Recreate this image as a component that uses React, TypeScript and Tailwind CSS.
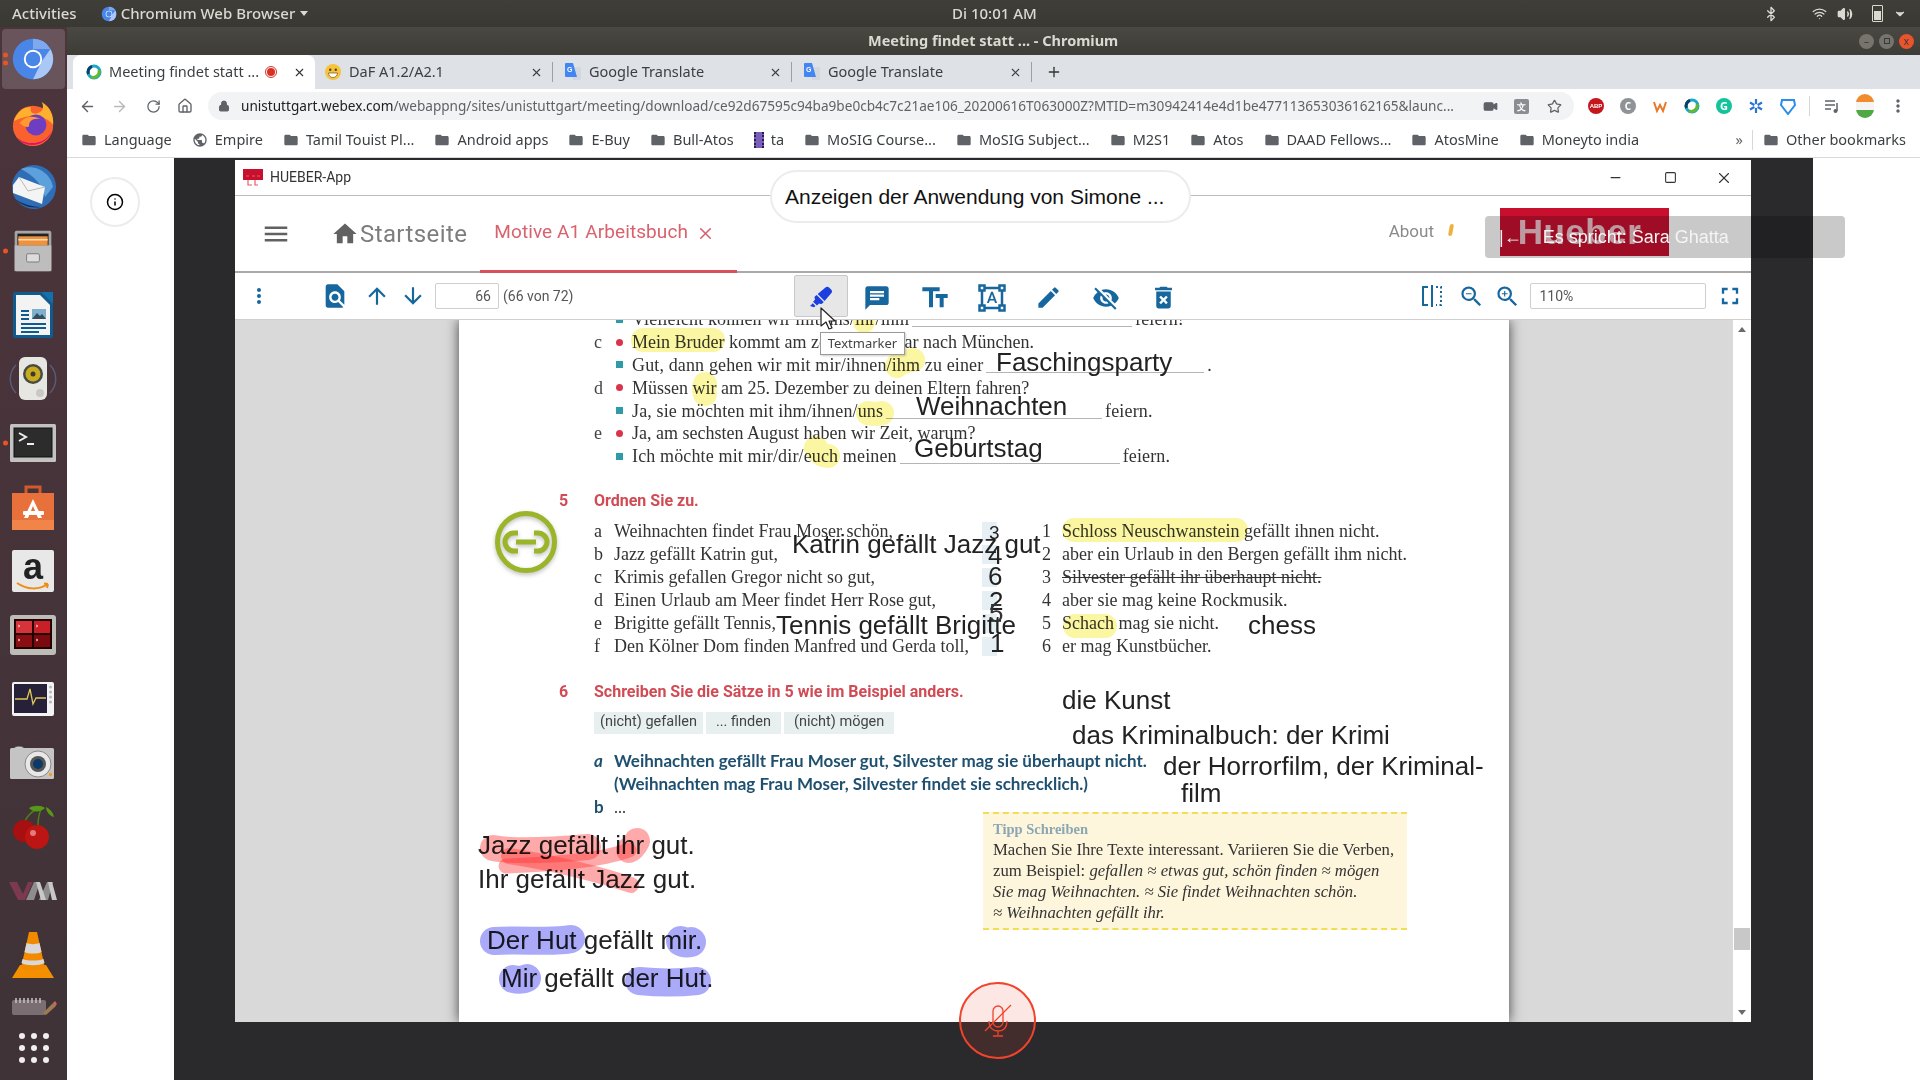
import type { ReactNode } from 'react';
import { ArrowLeft, ArrowRight, Bluetooth, ChevronDown, Home, Info, Lock, Minus, Plus, RotateCw, Square, Star, Video, Volume2, Wifi, X } from 'lucide-react';
import { FaHighlighter } from 'react-icons/fa';
import {
  MdArrowDownward,
  MdArrowUpward,
  MdChat,
  MdDeleteForever,
  MdEdit,
  MdFindInPage,
  MdFolder,
  MdFormatShapes,
  MdFullscreen,
  MdHome,
  MdMenu,
  MdMoreVert,
  MdPublic,
  MdTextFields,
  MdVisibilityOff,
  MdZoomIn,
  MdZoomOut,
} from 'react-icons/md';

function ChromiumIcon({ size = 44 }: { size?: number }) {
  return (
    <svg width={size} height={size} viewBox="0 0 48 48">
      <circle cx="24" cy="24" r="22" fill="#4a86e8" />
      <path d="M24 2a22 22 0 0 1 19 11H24z" fill="#7fa9ee" />
      <path d="M43 13a22 22 0 0 1-19 33l10-20z" fill="#a9c7f7" />
      <circle cx="24" cy="24" r="10" fill="#fff" />
      <circle cx="24" cy="24" r="8" fill="#4a86e8" />
    </svg>
  );
}

function FirefoxIcon() {
  return (
    <svg width="46" height="46" viewBox="0 0 48 48">
      <circle cx="24" cy="27" r="21" fill="#f9622d" />
      <path d="M4 22C8 10 18 6 22 8c-2 4 2 7 6 6 8-2 7-9 5-12 9 5 13 14 12 24-6-8-20-14-41-4z" fill="#ffb02e" />
      <path d="M6 38c10 10 30 10 38-6-4 14-26 22-38 6z" fill="#e3116c" />
      <circle cx="27" cy="26" r="11" fill="#6e3dc2" />
      <path d="M10 24c6-8 16-8 22-4-8-2-12 2-12 6s-6 2-10-2z" fill="#ff9a2e" />
    </svg>
  );
}

function ThunderbirdIcon() {
  return (
    <svg width="48" height="48" viewBox="0 0 48 48">
      <circle cx="25" cy="24" r="22" fill="#2f6db5" />
      <path d="M12 6c14-6 30 4 32 18l-8 10c-2-12-12-22-24-28z" fill="#5da1dc" />
      <path d="M4 22l6-8 26 10-3 17-29-11z" fill="#f4f4f4" />
      <path d="M10 14l9 14 17-4" fill="none" stroke="#b9b9b9" strokeWidth="1" />
      <path d="M6 36c6 6 14 10 26 8-10 0-20-4-26-8z" fill="#17315f" />
    </svg>
  );
}

function FilesIcon() {
  return (
    <svg width="44" height="44" viewBox="0 0 48 48">
      <rect x="4" y="2" width="40" height="44" rx="2" fill="#a6a6a6" />
      <rect x="7" y="5" width="34" height="13" fill="#222" />
      <rect x="8" y="8" width="32" height="10" fill="#f0913c" />
      <rect x="8" y="11" width="32" height="1.5" fill="#fde3c0" />
      <rect x="4" y="18" width="40" height="28" fill="#bdbdbd" />
      <rect x="17" y="27" width="14" height="9" rx="1.5" fill="#dcdcdc" stroke="#777" />
    </svg>
  );
}

function WriterIcon() {
  return (
    <svg width="44" height="48" viewBox="0 0 44 48">
      <path d="M2 3a2 2 0 0 1 2-2h26l12 12v32a2 2 0 0 1-2 2H4a2 2 0 0 1-2-2z" fill="#0f5a8e" />
      <path d="M5 4h24l10 10v30H5z" fill="#f3f3f3" />
      <path d="M30 1h12v12z" fill="#1370ad" />
      <path d="M10 20h8M10 24h8M10 28h8M10 33h25M10 37h25M10 41h18" stroke="#0f5a8e" strokeWidth="2" />
      <rect x="21" y="18" width="14" height="10" fill="#7fb1cf" />
      <path d="M21 28l5-6 3 3 2-2 4 5z" fill="#33505f" />
    </svg>
  );
}

function SpeakerIcon() {
  return (
    <svg width="48" height="48" viewBox="0 0 48 48">
      <path d="M7 10a20 20 0 0 0 0 28M41 10a20 20 0 0 1 0 28" fill="none" stroke="#5a5a78" strokeWidth="1.5" />
      <rect x="10" y="2" width="28" height="43" rx="6" fill="#e6e6e2" />
      <circle cx="24" cy="19" r="10" fill="#4a4a44" />
      <circle cx="24" cy="19" r="7.5" fill="#c9ac1e" />
      <circle cx="24" cy="19" r="2.5" fill="#3a3a33" />
      <circle cx="31" cy="38" r="4" fill="#c9c9c4" />
    </svg>
  );
}

function TerminalIcon() {
  return (
    <svg width="46" height="38" viewBox="0 0 46 38">
      <rect x="0" y="0" width="46" height="38" rx="1.5" fill="#c2c2c0" />
      <rect x="4" y="4" width="38" height="29" fill="#2c2c2c" stroke="#111" />
      <path d="M9 9l7 4-7 4" fill="none" stroke="#eee" strokeWidth="2" />
      <path d="M17 20h7" stroke="#eee" strokeWidth="2" />
    </svg>
  );
}

function StoreIcon() {
  return (
    <svg width="44" height="46" viewBox="0 0 44 46">
      <path d="M15 10V3h14v7" fill="none" stroke="#cf5a2c" strokeWidth="3" />
      <path d="M1 9h42v37H1z" fill="#e8703a" />
      <path d="M1 36h42v10H1z" fill="#f08449" />
      <path d="M22 15l9 19h-4l-5-12-5 12h-4z" fill="#fff" />
      <rect x="12" y="27" width="21" height="4" rx="1" fill="#fff" />
    </svg>
  );
}

function AmazonIcon() {
  return (
    <div className="flex h-[42px] w-[42px] flex-col items-center rounded-[2px] bg-[#e8e8e8]">
      <span className="text-[36px] font-bold leading-[34px] text-[#222] [font-family:'Liberation_Sans',sans-serif]">a</span>
      <svg width="36" height="9" viewBox="0 0 36 9" className="-mt-[2px]">
        <path d="M2 1c10 7 22 7 31 1M33 2l-4-.5M33 2l-1 4" fill="none" stroke="#f08c14" strokeWidth="2" />
      </svg>
    </div>
  );
}

function TerminatorIcon() {
  return (
    <svg width="46" height="40" viewBox="0 0 46 40">
      <rect width="46" height="40" rx="3" fill="#bdbdb8" />
      <rect x="4" y="4" width="38" height="30" fill="#220000" />
      <rect x="6" y="6" width="16" height="12" fill="#d6333a" />
      <rect x="24" y="6" width="16" height="12" fill="#c91f27" />
      <rect x="6" y="20" width="16" height="12" fill="#8a0e12" />
      <rect x="24" y="20" width="16" height="12" fill="#7a0a0e" />
      <path d="M8 10l2 1-2 1M26 10l2 1-2 1M8 24l2 1-2 1M26 24l2 1-2 1" stroke="#fff" strokeWidth=".7" fill="none" />
    </svg>
  );
}

function MonitorIcon() {
  return (
    <svg width="42" height="34" viewBox="0 0 42 34">
      <rect width="42" height="34" rx="2" fill="#f4f4f4" />
      <rect x="2" y="2" width="33" height="29" fill="#262138" />
      <path d="M3 17h12l3-10 3 15 3-6h10" fill="none" stroke="#dcc755" strokeWidth="1.3" />
      <circle cx="38.5" cy="5" r="1.6" fill="#bbb" />
      <circle cx="38.5" cy="10" r="1.6" fill="#bbb" />
      <circle cx="38.5" cy="15" r="1.6" fill="#bbb" />
      <circle cx="38.5" cy="20" r="1.6" fill="#bbb" />
    </svg>
  );
}

function CameraIcon() {
  return (
    <svg width="46" height="34" viewBox="0 0 46 34">
      <ellipse cx="9" cy="3" rx="5" ry="2.5" fill="#d4d4d4" stroke="#777" strokeWidth=".6" />
      <rect y="2" width="44" height="31" rx="1.5" fill="#c4c4c4" />
      <circle cx="28" cy="18" r="13" fill="#e8e8e8" stroke="#888" />
      <circle cx="28" cy="18" r="8" fill="#555" />
      <circle cx="28" cy="18" r="5" fill="#0c3a66" />
      <rect x="39" y="27" width="3" height="3" fill="#f0a030" />
    </svg>
  );
}

function CherryIcon() {
  return (
    <svg width="46" height="46" viewBox="0 0 46 46">
      <path d="M15 17c3-6 8-10 12-12M28 22c0-6 1-12 3-17" fill="none" stroke="#4f7c16" strokeWidth="1.5" />
      <path d="M19 4c5-3 12-3 16 0-4 4-12 5-16 0zM36 3c4 2 7 5 8 10-4-1-8-5-8-10z" fill="#559a16" />
      <circle cx="14" cy="27" r="11" fill="#a80f10" />
      <circle cx="27" cy="33" r="12" fill="#bd1414" />
      <circle cx="23" cy="29" r="3" fill="#e77a7a" />
    </svg>
  );
}

function VimIcon() {
  return (
    <svg width="48" height="20" viewBox="0 0 48 20">
      <path d="M0 1h8l6 12 5-12h5l-8 18H9z" fill="#7c3a50" />
      <path d="M17 19L25 1h6l-6 18zM30 19l8-18h6l-5 18z" fill="#8d8d8d" />
      <path d="M27 1h4l6 18h-5zM39 1h4l5 18h-5z" fill="#c8c8c8" />
    </svg>
  );
}

function VlcIcon() {
  return (
    <svg width="42" height="46" viewBox="0 0 42 46">
      <path d="M8 33L0 46h42l-8-13z" fill="#f49000" />
      <path d="M17 0h8l8 36c-4 3-20 3-24 0z" fill="#f28a00" />
      <path d="M14.5 11c3 1.5 10 1.5 13 0l2 9c-4 2-13 2-17 0zM10.5 27c5 2 16 2 21 0l1 4c-5 3-18 3-23 0z" fill="#d8d8d8" />
    </svg>
  );
}

function NotesIcon() {
  return (
    <svg width="46" height="18" viewBox="0 0 46 18">
      <rect x="1" y="3" width="34" height="15" rx="2" fill="#7b6e72" />
      <path d="M5 1v5M9 1v5M13 1v5M17 1v5M21 1v5M25 1v5M29 1v5" stroke="#c9c4c4" strokeWidth="1.5" />
      <path d="M32 16l10-10 3 3-10 9z" fill="#9c7a52" />
      <path d="M42 6l2-2 2 3-2 2z" fill="#d0635a" />
    </svg>
  );
}

function DockDots() {
  return (
    <div className="grid grid-cols-3 gap-x-[6px] gap-y-[6px]">
      {Array.from({ length: 9 }).map((_, i) => (
        <span key={i} className="h-[6px] w-[6px] rounded-full bg-[#f0eeee]" />
      ))}
    </div>
  );
}

const dockItems: { icon: ReactNode; dots?: number; active?: boolean }[] = [
  { icon: <ChromiumIcon />, dots: 2, active: true },
  { icon: <FirefoxIcon /> },
  { icon: <ThunderbirdIcon /> },
  { icon: <FilesIcon />, dots: 1 },
  { icon: <WriterIcon /> },
  { icon: <SpeakerIcon /> },
  { icon: <TerminalIcon />, dots: 1 },
  { icon: <StoreIcon /> },
  { icon: <AmazonIcon /> },
  { icon: <TerminatorIcon /> },
  { icon: <MonitorIcon /> },
  { icon: <CameraIcon /> },
  { icon: <CherryIcon /> },
  { icon: <VimIcon /> },
  { icon: <VlcIcon /> },
];

function Dock() {
  return (
    <aside className="flex w-[67px] shrink-0 flex-col items-center bg-[linear-gradient(180deg,#4c343b_0%,#3f3337_100%)]">
      {dockItems.map((item, i) => (
        <div key={i} className="relative flex h-[64px] w-full items-center justify-center pr-[1px]">
          {item.active ? <div className="absolute inset-x-[2px] inset-y-[2px] rounded-[4px] bg-[rgba(255,255,255,0.16)]" /> : null}
          <div className="relative flex items-center justify-center">{item.icon}</div>
          {item.dots ? (
            <div className="absolute left-[3px] top-1/2 flex -translate-y-1/2 flex-col gap-[3px]">
              {Array.from({ length: item.dots }).map((_, d) => (
                <span key={d} className="h-[5px] w-[5px] rounded-full bg-[#e95420]" />
              ))}
            </div>
          ) : null}
        </div>
      ))}
      <div className="flex h-[38px] items-center justify-center"><NotesIcon /></div>
      <div className="flex h-[46px] items-center justify-center"><DockDots /></div>
    </aside>
  );
}

function TopPanel() {
  return (
    <div className="flex h-[27px] shrink-0 items-center bg-[linear-gradient(180deg,#403e39_0%,#3a3833_100%)] text-[15px] font-medium text-[#dcd9d1] [font-family:'Noto_Sans',sans-serif]">
      <div className="flex w-[952px] items-center pl-[12px]">
        <span>Activities</span>
        <span className="ml-[24px] mr-[4px]"><ChromiumIcon size={16} /></span>
        <span>Chromium Web Browser</span>
        <span className="ml-[5px] h-0 w-0 border-x-[4px] border-t-[5px] border-x-transparent border-t-[#dcd9d1]" />
      </div>
      <span>Di 10:01 AM</span>
      <div className="ml-auto flex items-center pr-[13px]">
        <Bluetooth size={16} />
        <Wifi size={15} className="ml-[33px]" />
        <Volume2 size={16} className="ml-[10px]" fill="currentColor" />
        <div className="relative ml-[19px] h-[17px] w-[11px] rounded-[1px] border-[1.5px] border-[#dcd9d1]">
          <div className="absolute inset-x-[1px] bottom-[1px] top-[5px] bg-[#dcd9d1]" />
        </div>
        <ChevronDown size={14} className="ml-[10px]" fill="currentColor" />
      </div>
    </div>
  );
}

function WebexFavicon() {
  return (
    <svg width="16" height="16" viewBox="0 0 16 16">
      <circle cx="8" cy="8" r="6" fill="none" stroke="#1ba7c9" strokeWidth="3" />
      <path d="M5 13a6 6 0 0 0 8-7" fill="none" stroke="#66b82e" strokeWidth="3" />
      <path d="M2.5 10A6 6 0 0 1 6 2.3" fill="none" stroke="#0b3f63" strokeWidth="3" />
    </svg>
  );
}

function SmileyFavicon() {
  return (
    <svg width="16" height="16" viewBox="0 0 16 16">
      <circle cx="8" cy="8" r="8" fill="#f6c33a" />
      <circle cx="5.2" cy="5.8" r="1.2" fill="#5a3a10" />
      <circle cx="10.8" cy="5.8" r="1.2" fill="#5a3a10" />
      <path d="M3.5 9h9a4.5 4.5 0 0 1-9 0z" fill="#fff" stroke="#5a3a10" strokeWidth=".6" />
    </svg>
  );
}

function TranslateFavicon() {
  return (
    <svg width="16" height="18" viewBox="0 0 16 18">
      <path d="M6 4h9a1 1 0 0 1 1 1v11a1 1 0 0 1-1 1H8z" fill="#d4d8de" />
      <path d="M1 0h7l4 14H1a1 1 0 0 1-1-1V1a1 1 0 0 1 1-1z" fill="#4285f4" />
      <text x="2" y="9" fontSize="7" fontWeight="700" fill="#fff" fontFamily="Liberation Sans, sans-serif">G</text>
    </svg>
  );
}

function TabStrip() {
  const tabs = [
    { title: 'DaF A1.2/A2.1', icon: <SmileyFavicon />, cls: 'w-[238px] pl-[10px]' },
    { title: 'Google Translate', icon: <TranslateFavicon />, cls: 'w-[239px] pl-[12px]' },
    { title: 'Google Translate', icon: <TranslateFavicon />, cls: 'w-[240px] pl-[12px]' },
  ];
  return (
    <div className="flex h-[34px] shrink-0 items-end bg-[#dee1e6] pl-[6px] text-[14.5px] text-[#3c4043]">
      <div className="flex h-[34px] w-[242px] items-center rounded-t-[8px] bg-white pl-[13px] pr-[9px]">
        <WebexFavicon />
        <span className="ml-[7px] whitespace-nowrap">Meeting findet statt ...</span>
        <span className="ml-[6px] flex h-[12px] w-[12px] items-center justify-center rounded-full border border-[#d93025]">
          <span className="h-[8px] w-[8px] rounded-full bg-[#d93025]" />
        </span>
        <X size={13} className="ml-auto text-[#333]" />
      </div>
      {tabs.map((tab, i) => (
        <div key={i} className={`flex h-[34px] items-center ${tab.cls}`}>
          {tab.icon}
          <span className="ml-[8px] whitespace-nowrap">{tab.title}</span>
          <X size={13} className="ml-auto" />
          <span className="ml-[9px] h-[20px] w-px bg-[#9aa0a6]" />
        </div>
      ))}
      <Plus size={16} className="mb-[9px] ml-[14px] text-[#333]" />
    </div>
  );
}

function AddressBar() {
  return (
    <div className="flex h-[34px] shrink-0 items-center bg-white text-[#5f6368]">
      <ArrowLeft size={17} className="ml-[12px]" />
      <ArrowRight size={17} className="ml-[15px] text-[#b8babd]" />
      <RotateCw size={15} className="ml-[18px]" />
      <Home size={16} className="ml-[16px]" />
      <div className="ml-[15px] flex h-[28px] w-[1366px] items-center rounded-full bg-[#f1f3f4] pl-[10px] pr-[12px] text-[13.6px] text-[#5f6368]">
        <Lock size={12} fill="currentColor" className="text-[#5f6368]" />
        <span className="ml-[11px] w-[1226px] whitespace-nowrap">
          <span className="text-[#202124]">unistuttgart.webex.com</span>/webappng/sites/unistuttgart/meeting/download/ce92d67595c94ba9be0cb4c7c21ae106_20200616T063000Z?MTID=m30942414e4d1be477113653036162165&launc...
        </span>
        <Video size={15} fill="currentColor" className="ml-[18px]" />
        <span className="ml-[16px] flex h-[15px] w-[15px] items-center justify-center rounded-[2px] bg-[#8a8d91] text-[9px] font-bold leading-none text-white">文</span>
        <Star size={15} className="ml-[18px]" />
      </div>
      <div className="ml-[14px] flex items-center">
        <span className="flex h-[16px] w-[16px] items-center justify-center rounded-full bg-[#c4161c] text-[6px] font-bold text-white [font-family:'Liberation_Sans',sans-serif]">ABP</span>
        <span className="ml-[16px] flex h-[16px] w-[16px] items-center justify-center rounded-full bg-[#8f9397] text-[10px] font-bold text-white">C</span>
        <svg width="16" height="16" viewBox="0 0 16 16" className="ml-[16px]"><path d="M2 4l3 9 3-6 3 6 3-9" fill="none" stroke="#e8792b" strokeWidth="2" /></svg>
        <span className="ml-[16px]"><WebexFavicon /></span>
        <span className="ml-[16px] flex h-[16px] w-[16px] items-center justify-center rounded-full bg-[#15c39a] text-[11px] font-bold text-white">G</span>
        <svg width="16" height="16" viewBox="0 0 16 16" className="ml-[16px]"><path d="M8 1v14M2 4.5l12 7M14 4.5l-12 7" stroke="#2a76d2" strokeWidth="2.2" /><circle cx="8" cy="8" r="2" fill="#fff" /></svg>
        <svg width="16" height="18" viewBox="0 0 16 18" className="ml-[16px]"><path d="M2 3h12l1 5-7 9-7-9z" fill="none" stroke="#2a8ee8" strokeWidth="2" /></svg>
        <span className="ml-[13px] h-[20px] w-px bg-[#d5d7da]" />
        <svg width="16" height="16" viewBox="0 0 16 16" className="ml-[14px]"><path d="M1 3h10M1 7h10M1 11h6" stroke="#5f6368" strokeWidth="1.5" /><path d="M13 5v8" stroke="#5f6368" strokeWidth="1.5" /><circle cx="11.5" cy="13" r="2" fill="#5f6368" /></svg>
        <span className="ml-[16px] h-[24px] w-[18px] rounded-full bg-[linear-gradient(180deg,#f08c2c_0%,#f08c2c_33%,#f4f4f4_33%,#f4f4f4_66%,#4fa843_66%)]" />
        <MdMoreVert size={20} className="ml-[14px] text-[#5f6368]" />
      </div>
    </div>
  );
}

function BookmarksBar() {
  const marks: { label: string; icon?: ReactNode }[] = [
    { label: 'Language' },
    { label: 'Empire', icon: <MdPublic size={16} /> },
    { label: 'Tamil Touist Pl...' },
    { label: 'Android apps' },
    { label: 'E-Buy' },
    { label: 'Bull-Atos' },
    { label: 'ta', icon: <span className="h-[16px] w-[10px] border-x-2 border-dotted border-[#2a1c4a] bg-[#7a5fb8]" /> },
    { label: 'MoSIG Course...' },
    { label: 'MoSIG Subject...' },
    { label: 'M2S1' },
    { label: 'Atos' },
    { label: 'DAAD Fellows...' },
    { label: 'AtosMine' },
    { label: 'Moneyto india' },
  ];
  return (
    <div className="flex h-[35px] shrink-0 items-center border-b border-[#d7d9dc] bg-white pl-[14px] text-[14.5px] text-[#3c4043]">
      <div className="flex items-center gap-[20px]">
        {marks.map((mark) => (
          <div key={mark.label} className="flex items-center gap-[7px] text-[#5f6368]">
            {mark.icon ?? <MdFolder size={16} />}
            <span className="whitespace-nowrap text-[#3c4043]">{mark.label}</span>
          </div>
        ))}
      </div>
      <span className="ml-auto text-[#5f6368]">»</span>
      <span className="ml-[9px] h-[20px] w-px bg-[#d5d7da]" />
      <div className="ml-[10px] mr-[14px] flex items-center gap-[7px] text-[#5f6368]">
        <MdFolder size={16} />
        <span className="whitespace-nowrap text-[#3c4043]">Other bookmarks</span>
      </div>
    </div>
  );
}

function AppTitleBar() {
  return (
    <div className="flex h-[36px] shrink-0 items-center border-b border-[#bdbdbd] bg-white pl-[8px] text-[14px] text-[#333] [font-family:'Roboto',sans-serif]">
      <svg width="20" height="18" viewBox="0 0 20 18">
        <path d="M0 0h20v11H0z" fill="#c8102e" />
        <path d="M3 7h3M9 7h3M14 7h3M5 11v5h4M12 11v5h3" stroke="#e8596c" strokeWidth="1.2" fill="none" />
      </svg>
      <span className="ml-[7px]">HUEBER-App</span>
      <div className="ml-auto flex items-center pr-[18px] text-[#333]">
        <Minus size={15} />
        <Square size={13} className="ml-[41px]" />
        <X size={18} strokeWidth={1.5} className="ml-[38px]" />
      </div>
    </div>
  );
}

function AppHeader() {
  return (
    <div className="relative flex h-[77px] shrink-0 items-center border-b-2 border-[#a9a9a9] bg-white [font-family:'Roboto',sans-serif]">
      <MdMenu size={30} className="ml-[26px] text-[#616161]" />
      <MdHome size={28} className="ml-[40px] text-[#616161]" />
      <span className="ml-[1px] text-[24px] tracking-[0.4px] text-[#7d7d7d]">Startseite</span>
      <span className="ml-[27px] -mt-[3px] text-[19px] tracking-[0.1px] text-[#d9626d]">Motive A1 Arbeitsbuch</span>
      <X size={19} className="ml-[8px] text-[#d9626d]" />
      <div className="absolute bottom-[-2px] left-[245px] h-[3px] w-[257px] bg-[#d9505c]" />
      <span className="ml-auto -mt-[3px] text-[17px] text-[#8a8a8a]">About</span>
      <span className="ml-[15px] -mt-[8px] h-[12px] w-[4px] skew-x-[-10deg] rounded-full bg-[#efb13d]" />
      <div className="ml-[47px] mt-[-3px] mr-[82px] flex h-[48px] w-[169px] items-center justify-center bg-[#c8102e] pr-[10px]">
        <span className="text-[35px] font-bold tracking-[0.5px] text-[#f0c4cc] [font-family:'Liberation_Sans',sans-serif]">Hueber</span>
      </div>
    </div>
  );
}

function ToolIcon({ children, w = 'w-[36px]' }: { children: ReactNode; w?: string }) {
  return <div className={`flex h-[47px] ${w} items-center justify-center text-[#17679f]`}>{children}</div>;
}

function SplitPageIcon() {
  return (
    <svg width="24" height="24" viewBox="0 0 24 24" fill="none" stroke="#17679f" strokeWidth="2">
      <path d="M8 3H3v18h5M12 1v22" />
      <path d="M16 3h5v18h-5" strokeDasharray="2 2.5" />
    </svg>
  );
}

function AppToolbar() {
  return (
    <div className="flex h-[47px] shrink-0 items-center border-b border-[#cfcfcf] bg-white text-[14px] text-[#555] [font-family:'Roboto',sans-serif]">
      <ToolIcon w="w-[24px] ml-[12px]"><MdMoreVert size={26} /></ToolIcon>
      <ToolIcon w="w-[36px] ml-[46px]"><MdFindInPage size={28} /></ToolIcon>
      <ToolIcon w="w-[36px] ml-[6px]"><MdArrowUpward size={26} /></ToolIcon>
      <ToolIcon w="w-[36px]"><MdArrowDownward size={26} /></ToolIcon>
      <input readOnly value="66" className="ml-[4px] h-[26px] w-[64px] rounded-[2px] border border-[#cfcfcf] pr-[7px] text-right text-[14px] text-[#555]" />
      <span className="ml-[4px] whitespace-nowrap">(66 von 72)</span>
      <div className="ml-[221px] flex h-[42px] w-[54px] items-center justify-center rounded-[2px] border border-[#c8c8c8] bg-[#e7e7e7] pt-[2px] text-[#1d3fe0]">
        <FaHighlighter size={22} />
      </div>
      <ToolIcon w="w-[58px] pt-[3px]"><MdChat size={28} /></ToolIcon>
      <ToolIcon w="w-[57px] pt-[3px]"><MdTextFields size={32} /></ToolIcon>
      <ToolIcon w="w-[57px] pt-[3px]"><MdFormatShapes size={30} /></ToolIcon>
      <ToolIcon w="w-[57px] pt-[3px]"><MdEdit size={27} /></ToolIcon>
      <ToolIcon w="w-[58px] pt-[3px]"><MdVisibilityOff size={28} /></ToolIcon>
      <ToolIcon w="w-[57px] pt-[3px]"><MdDeleteForever size={29} /></ToolIcon>
      <ToolIcon w="w-[36px] ml-[222px]"><SplitPageIcon /></ToolIcon>
      <ToolIcon w="w-[36px] ml-[3px]"><MdZoomOut size={27} /></ToolIcon>
      <ToolIcon w="w-[36px]"><MdZoomIn size={27} /></ToolIcon>
      <input readOnly value="110%" className="ml-[5px] h-[26px] w-[176px] rounded-[2px] border border-[#cfcfcf] pl-[8px] text-[14px] text-[#555]" />
      <ToolIcon w="w-[36px] ml-[6px]"><MdFullscreen size={28} /></ToolIcon>
    </div>
  );
}

function Bullet({ kind }: { kind: 'red' | 'teal' }) {
  return kind === 'red' ? (
    <span className="h-[7px] w-[7px] shrink-0 rounded-full bg-[#d9344c]" />
  ) : (
    <span className="h-[7px] w-[7px] shrink-0 bg-[#2f9aa8]" />
  );
}

function DialogRow({ letter, kind, children }: { letter?: string; kind: 'red' | 'teal'; children: ReactNode }) {
  return (
    <div className={`flex h-[22.8px] items-center whitespace-nowrap ${kind === 'teal' ? 'tracking-[0.14px]' : ''}`}>
      <span className="w-[22px] text-[#444]">{letter}</span>
      <Bullet kind={kind} />
      <span className="ml-[9px]">{children}</span>
    </div>
  );
}

function Blank({ w }: { w: string }) {
  return <span className={`mx-[3px] inline-block h-[1px] ${w} align-[-2px] bg-[#b5b5b5]`} />;
}

const matchLeft = [
  ['a', 'Weihnachten findet Frau Moser schön,'],
  ['b', 'Jazz gefällt Katrin gut,'],
  ['c', 'Krimis gefallen Gregor nicht so gut,'],
  ['d', 'Einen Urlaub am Meer findet Herr Rose gut,'],
  ['e', 'Brigitte gefällt Tennis,'],
  ['f', 'Den Kölner Dom finden Manfred und Gerda toll,'],
];

const matchRight = [
  'Schloss Neuschwanstein gefällt ihnen nicht.',
  'aber ein Urlaub in den Bergen gefällt ihm nicht.',
  'Silvester gefällt ihr überhaupt nicht.',
  'aber sie mag keine Rockmusik.',
  'Schach mag sie nicht.',
  'er mag Kunstbücher.',
];

function PageHighlights() {
  return (
    <svg width="1050" height="702" viewBox="0 0 1050 702" fill="none" strokeLinecap="round" strokeLinejoin="round" className="pointer-events-none absolute left-0 top-0 mix-blend-multiply">
      <g stroke="#fbf6a2" strokeWidth="24">
        <path d="M184 20h70" />
        <path d="M438 46c2-4 14-6 16-6" />
        <path d="M246 74c-1-4-1-8 0-10" />
        <path d="M409 93c4 1 10 1 14 0" />
        <path d="M357 128c2 4 6 8 12 8" />
        <path d="M615 210h162" />
        <path d="M616 306h30" />
        <path d="M405 0v2" strokeWidth="22" />
      </g>
      <g stroke="#ff3434" strokeOpacity="0.42">
        <path d="M34 528c20 4 60 2 95-1" strokeWidth="26" />
        <path d="M170 530c3-1 6-5 8-9" strokeWidth="26" />
        <path d="M47 546c40-2 90-4 123-16" strokeWidth="15" />
        <path d="M50 536c40 6 90 18 122 29" strokeWidth="16" />
      </g>
      <g stroke="#aaaaf9">
        <path d="M35 621c30-2 60 2 77-2" strokeWidth="28" />
        <path d="M222 621c3 2 6 2 10 1" strokeWidth="30" />
        <path d="M54 659c4 1 10 1 14-1" strokeWidth="28" />
        <path d="M180 661c20 2 40 2 58 0" strokeWidth="28" />
      </g>
    </svg>
  );
}

const noteClass = "absolute whitespace-nowrap text-[26px] leading-none text-[#222] [font-family:'Liberation_Sans',sans-serif]";

function PageNotes() {
  return (
    <>
      <span className={`${noteClass} left-[537px] top-[29px]`}>Faschingsparty</span>
      <span className={`${noteClass} left-[457px] top-[73px]`}>Weihnachten</span>
      <span className={`${noteClass} left-[455px] top-[115px]`}>Geburtstag</span>
      <span className={`${noteClass} left-[333px] top-[211px]`}>Katrin gefällt Jazz gut</span>
      <span className={`${noteClass} left-[317px] top-[292px]`}>Tennis gefällt Brigitte</span>
      <span className={`${noteClass} left-[789px] top-[292px]`}>chess</span>
      <span className={`${noteClass} left-[530px] top-[203px] !text-[19px]`}>3</span>
      <span className={`${noteClass} left-[529px] top-[222px]`}>4</span>
      <span className={`${noteClass} left-[529px] top-[243px]`}>6</span>
      <span className={`${noteClass} left-[530px] top-[268px]`}>2</span>
      <span className={`${noteClass} left-[530px] top-[280px] !text-[#333]`}>5</span>
      <span className={`${noteClass} left-[531px] top-[310px]`}>1</span>
      <span className={`${noteClass} left-[603px] top-[367px]`}>die Kunst</span>
      <span className={`${noteClass} left-[613px] top-[402px]`}>das Kriminalbuch: der Krimi</span>
      <span className={`${noteClass} left-[704px] top-[433px]`}>der Horrorfilm, der Kriminal-</span>
      <span className={`${noteClass} left-[722px] top-[460px]`}>film</span>
      <span className={`${noteClass} left-[19px] top-[512px]`}>Jazz gefällt ihr gut.</span>
      <span className={`${noteClass} left-[19px] top-[546px]`}>Ihr gefällt Jazz gut.</span>
      <span className={`${noteClass} left-[28px] top-[607px]`}>Der Hut gefällt mir.</span>
      <span className={`${noteClass} left-[42px] top-[645px]`}>Mir gefällt der Hut.</span>
    </>
  );
}

function LinkBadge() {
  return (
    <svg width="64" height="64" viewBox="0 0 64 64" fill="none" stroke="#9ab52a" className="absolute left-[35px] top-[190px] drop-shadow-[0_2px_2px_rgba(0,0,0,0.25)]">
      <circle cx="32" cy="32" r="28.5" strokeWidth="5" />
      <path d="M24 23h-4a9 9 0 0 0 0 18h4M40 23h4a9 9 0 0 1 0 18h-4M22 32h20" strokeWidth="5" />
    </svg>
  );
}

function PdfPage() {
  return (
    <div className="relative h-[702px] w-[1050px] shrink-0 overflow-hidden bg-white pl-[135px] text-[18px] leading-none text-[#333] [font-family:'Liberation_Serif',serif]">
      <div className="-mt-[12px]">
        <DialogRow kind="teal">Vielleicht können wir mit uns/ihr/ihm<Blank w="w-[220px]" />feiern!</DialogRow>
        <DialogRow letter="c" kind="red">Mein Bruder kommt am zehnten Januar nach München.</DialogRow>
        <DialogRow kind="teal">Gut, dann gehen wir mit mir/ihnen/ihm zu einer<Blank w="w-[218px]" />.</DialogRow>
        <DialogRow letter="d" kind="red">Müssen wir am 25. Dezember zu deinen Eltern fahren?</DialogRow>
        <DialogRow kind="teal">Ja, sie möchten mit ihm/ihnen/uns<Blank w="w-[216px]" />feiern.</DialogRow>
        <DialogRow letter="e" kind="red">Ja, am sechsten August haben wir Zeit, warum?</DialogRow>
        <DialogRow kind="teal">Ich möchte mit mir/dir/euch meinen<Blank w="w-[220px]" />feiern.</DialogRow>
      </div>

      <div className="relative mt-[22px] flex h-[23px] items-center text-[16px] font-bold text-[#d14b55] [font-family:'Roboto',sans-serif]">
        <span className="absolute -left-[35px]">5</span>
        <span>Ordnen Sie zu.</span>
      </div>
      <LinkBadge />
      <div className="mt-[7px] flex">
        <div className="w-[393px]">
          {matchLeft.map(([letter, text]) => (
            <div key={letter} className="flex h-[23px] items-center whitespace-nowrap">
              <span className="w-[20px]">{letter}</span>
              <span>{text}</span>
            </div>
          ))}
        </div>
        <div className="-ml-[5px] mr-[14px] flex w-[46px] flex-col">
          {matchRight.map((_, i) => (
            <div key={i} className="flex h-[23px] items-center">
              <div className="h-[19px] w-[15px] bg-[#e6eff3]" />
            </div>
          ))}
        </div>
        <div>
          {matchRight.map((text, i) => (
            <div key={text} className="flex h-[23px] items-center whitespace-nowrap">
              <span className="w-[20px]">{i + 1}</span>
              <span className={i === 2 ? 'line-through' : ''}>{text}</span>
            </div>
          ))}
        </div>
      </div>

      <div className="relative mt-[23px] flex h-[23px] items-center text-[16px] font-bold text-[#d14b55] [font-family:'Roboto',sans-serif]">
        <span className="absolute -left-[35px]">6</span>
        <span>Schreiben Sie die Sätze in 5 wie im Beispiel anders.</span>
      </div>
      <div className="mt-[8px] flex h-[22px] items-center gap-[3px] text-[14.5px] text-[#444] [font-family:'Roboto',sans-serif]">
        <span className="flex h-full items-center bg-[#e7f0ef] px-[6px]">(nicht) gefallen</span>
        <span className="flex h-full items-center bg-[#e7f0ef] px-[10px]">... finden</span>
        <span className="flex h-full items-center bg-[#e7f0ef] px-[10px]">(nicht) mögen</span>
      </div>
      <div className="mt-[15px] text-[17px] font-bold text-[#1f5070] [font-family:'Lato',sans-serif]">
        <div className="flex h-[23px] items-center whitespace-nowrap">
          <span className="w-[20px] italic">a</span>
          <span>Weihnachten gefällt Frau Moser gut, Silvester mag sie überhaupt nicht.</span>
        </div>
        <div className="flex h-[23px] items-center whitespace-nowrap pl-[20px]">(Weihnachten mag Frau Moser, Silvester findet sie schrecklich.)</div>
        <div className="flex h-[23px] items-center whitespace-nowrap">
          <span className="w-[20px]">b</span>
          <span className="font-normal text-[#444]">...</span>
        </div>
      </div>
      <div className="ml-[389px] -mt-[6px] h-[118px] w-[424px] border-y-2 border-dashed border-[#f2dd57] bg-[#fdf5dc] px-[10px] pt-[6px] text-[16.7px] text-[#333]">
        <div className="flex h-[20px] items-center text-[14.5px] font-bold text-[#8ba7b3]">Tipp Schreiben</div>
        <div className="flex h-[21px] items-center whitespace-nowrap">Machen Sie Ihre Texte interessant. Variieren Sie die Verben,</div>
        <div className="flex h-[21px] items-center whitespace-nowrap">zum Beispiel:&nbsp;<i>gefallen ≈ etwas gut, schön finden ≈ mögen</i></div>
        <div className="flex h-[21px] items-center whitespace-nowrap"><i>Sie mag Weihnachten. ≈ Sie findet Weihnachten schön.</i></div>
        <div className="flex h-[21px] items-center whitespace-nowrap"><i>≈ Weihnachten gefällt ihr.</i></div>
      </div>

      <PageNotes />
      <PageHighlights />
    </div>
  );
}

function DocScrollbar() {
  return (
    <div className="relative flex h-full w-[18px] shrink-0 flex-col items-center justify-between bg-white py-[7px]">
      <span className="h-0 w-0 border-x-[4px] border-b-[5px] border-x-transparent border-b-[#6b6b6b]" />
      <div className="absolute left-[1px] top-[608px] h-[22px] w-[16px] bg-[#c8c8c8]" />
      <span className="h-0 w-0 border-x-[4px] border-t-[5px] border-x-transparent border-t-[#6b6b6b]" />
    </div>
  );
}

function HueberWindow() {
  return (
    <div className="flex h-[862px] flex-col bg-white">
      <AppTitleBar />
      <AppHeader />
      <AppToolbar />
      <div className="flex min-h-0 flex-1">
        <div className="flex min-w-0 flex-1 justify-center overflow-hidden bg-[#d9d9d9]">
          <div className="shadow-[0_0_12px_rgba(0,0,0,0.7)]">
            <PdfPage />
          </div>
        </div>
        <DocScrollbar />
      </div>
    </div>
  );
}

function MicBadge() {
  return (
    <div className="absolute left-[959px] top-[982px] flex h-[77px] w-[77px] items-center justify-center rounded-full border-2 border-[#f0442c] bg-[rgba(240,68,44,0.13)]">
      <svg width="30" height="36" viewBox="0 0 30 36" fill="none" stroke="#f0442c" strokeWidth="1.3">
        <rect x="10" y="3" width="10" height="21" rx="5" />
        <path d="M6 18c0 7 4 10 9 10s9-3 9-10M15 28v4M10 33h10M2 28L28 2" />
      </svg>
    </div>
  );
}

function Cursor() {
  return (
    <svg width="16" height="24" viewBox="0 0 16 24" className="absolute left-[820px] top-[307px]">
      <path d="M1 1v18l5-4 3 7 3-1-3-7h6z" fill="#fff" stroke="#222" strokeWidth="1.2" strokeLinejoin="round" />
    </svg>
  );
}

export default function App() {
  return (
    <div className="relative flex h-[1080px] w-[1920px] flex-col overflow-hidden bg-white [font-family:'Noto_Sans',sans-serif]">
      <TopPanel />
      <div className="flex min-h-0 flex-1">
        <Dock />
        <div className="flex min-w-0 flex-1 flex-col">
          <div className="flex h-[28px] shrink-0 items-center bg-[linear-gradient(180deg,#4a4843_0%,#3e3c37_100%)]">
            <span className="ml-[801px] text-[14.5px] font-bold text-[#dcd9d1]">Meeting findet statt ... - Chromium</span>
            <div className="ml-auto flex items-center gap-[5px] pr-[6px]">
              <span className="flex h-[15px] w-[15px] items-center justify-center rounded-full bg-[#77746e] text-[10px] leading-none text-[#3a3833]">–</span>
              <span className="flex h-[15px] w-[15px] items-center justify-center rounded-full bg-[#77746e]"><span className="h-[6px] w-[6px] border border-[#3a3833]" /></span>
              <span className="flex h-[15px] w-[15px] items-center justify-center rounded-full bg-[#e9542d] text-[10px] leading-none text-[#3a3833]">x</span>
            </div>
          </div>
          <TabStrip />
          <AddressBar />
          <BookmarksBar />
          <div className="flex min-h-0 flex-1">
            <div className="flex w-[107px] shrink-0 justify-center bg-white pr-[11px] pt-[19px]">
              <div className="flex h-[50px] w-[50px] items-center justify-center rounded-full border-2 border-[#ececec]">
                <Info size={18} className="text-black" />
              </div>
            </div>
            <div className="min-w-0 flex-1 bg-[#2a292c] pl-[61px] pr-[62px] pt-[2px]">
              <HueberWindow />
            </div>
            <div className="w-[107px] shrink-0 bg-white" />
          </div>
        </div>
      </div>

      <div className="absolute left-[770px] top-[170px] flex h-[53px] w-[421px] items-center rounded-full border-2 border-[#ececec] bg-white pl-[13px] text-[21px] text-[#111] [font-family:'Liberation_Sans',sans-serif]">
        Anzeigen der Anwendung von Simone ...
      </div>
      <div className="absolute left-[1485px] top-[216px] h-[42px] w-[360px] rounded-[4px] bg-[#c9c9c9] mix-blend-multiply" />
      <div className="absolute left-[1485px] top-[216px] flex h-[42px] w-[360px] items-center pl-[14px] text-[18px] text-[#f4f4f4] [font-family:'Liberation_Sans',sans-serif]">
        <span>|←</span>
        <span className="ml-[21px]">Es spricht: Sara Ghatta</span>
      </div>
      <div className="absolute left-[820px] top-[332px] flex h-[23px] w-[85px] items-center justify-center border border-[#999] bg-white text-[13px] text-[#444] shadow-[1px_1px_2px_rgba(0,0,0,0.2)]">
        Textmarker
      </div>
      <Cursor />
      <MicBadge />
    </div>
  );
}
